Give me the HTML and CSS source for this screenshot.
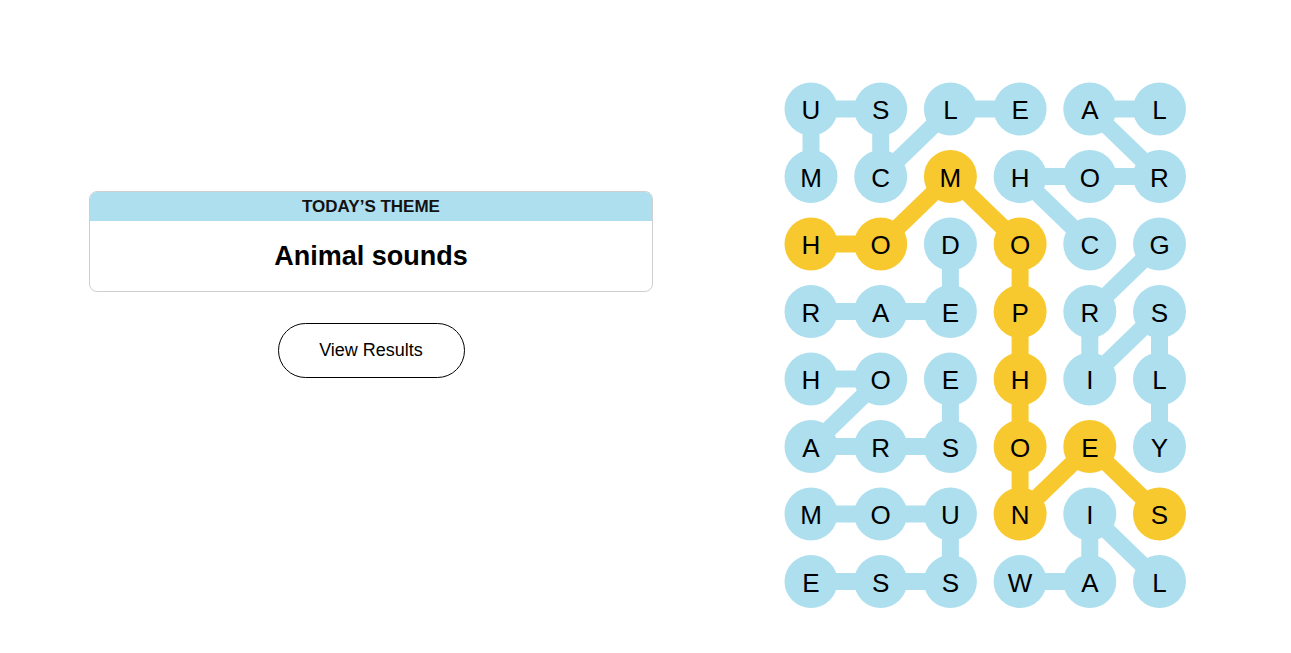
FILE: index.html
```html
<!DOCTYPE html>
<html lang="en">
  <head>
    <meta charset="UTF-8" />
    <meta name="viewport" content="width=device-width, initial-scale=1.0" />
    <title>Strands</title>
    <link rel="stylesheet" href="styles.css">
  </head>
  <body>
    <main class="juego">
      <section class="panel">
        <div class="tema">
          <div class="tema-titulo">TODAY’S THEME</div>
          <div class="tema-texto">Animal sounds</div>
        </div>
        <button class="resultados">View Results</button>
      </section>

      <svg class="tablero" width="404" height="528" viewBox="0 0 404 528"></svg>
    </main>

    <script>
      const letras = [
        "USLEAL",
        "MCMHOR",
        "HODOCG",
        "RAEPRS",
        "HOEHIL",
        "ARSOEY",
        "MOUNIS",
        "ESSWAL",
      ];

      // [fila, columna] de cada palabra encontrada
      const palabras = [
        { tipo: "azul", ruta: [[1,0],[0,0],[0,1],[1,1],[0,2],[0,3]] },
        { tipo: "azul", ruta: [[2,4],[1,3],[1,4],[1,5],[0,4],[0,5]] },
        { tipo: "azul", ruta: [[2,2],[3,2],[3,1],[3,0]] },
        { tipo: "azul", ruta: [[2,5],[3,4],[4,4],[3,5],[4,5],[5,5]] },
        { tipo: "azul", ruta: [[4,0],[4,1],[5,0],[5,1],[5,2],[4,2]] },
        { tipo: "azul", ruta: [[6,0],[6,1],[6,2],[7,2],[7,1],[7,0]] },
        { tipo: "azul", ruta: [[7,3],[7,4],[6,4],[7,5]] },
        { tipo: "oro", ruta: [[2,0],[2,1],[1,2],[2,3],[3,3],[4,3],[5,3],[6,3],[5,4],[6,5]] },
      ];

      const tablero = document.querySelector(".tablero");
      const cx = (c) => 27 + c * 69.7;
      const cy = (f) => 27 + f * 67.5;

      let lineas = "";
      let puntos = "";
      const color = {};

      palabras.forEach((p) => {
        p.ruta.forEach(([f, c], i) => {
          color[f + "-" + c] = p.tipo;
          if (i > 0) {
            const [f0, c0] = p.ruta[i - 1];
            lineas += `<line class="enlace ${p.tipo}" x1="${cx(c0)}" y1="${cy(f0)}" x2="${cx(c)}" y2="${cy(f)}" />`;
          }
        });
      });

      letras.forEach((fila, f) => {
        fila.split("").forEach((l, c) => {
          const tipo = color[f + "-" + c] || "azul";
          puntos += `<circle class="punto ${tipo}" cx="${cx(c)}" cy="${cy(f)}" r="26.5" />`;
          puntos += `<text class="letra" x="${cx(c)}" y="${cy(f) + 1}">${l}</text>`;
        });
      });

      tablero.innerHTML = lineas + puntos;
    </script>
  </body>
</html>
```

FILE: styles.css
```css
body {
  margin: 0;
  background: #ffffff;
  font-family: "Liberation Sans", Arial, sans-serif;
  color: #000000;
}
.juego {
  display: flex;
  align-items: flex-start;
  padding: 82px 0 0 89px;
}
.panel {
  width: 564px;
  margin-top: 109px;
  margin-right: 131px;
  display: flex;
  flex-direction: column;
  align-items: center;
}
.tema {
  width: 100%;
  box-sizing: border-box;
  border: 1px solid #cfcfcf;
  border-radius: 8px;
  overflow: hidden;
}
.tema-titulo {
  background-color: #aedfee;
  height: 29px;
  line-height: 30px;
  text-align: center;
  font-size: 17px;
  font-weight: 700;
  color: #121212;
}
.tema-texto {
  height: 70px;
  line-height: 70px;
  text-align: center;
  font-size: 27px;
  font-weight: 700;
}
.resultados {
  margin-top: 31px;
  width: 187px;
  height: 55px;
  border: 1px solid #000000;
  border-radius: 28px;
  background: #ffffff;
  font-family: "Liberation Sans", Arial, sans-serif;
  font-size: 18px;
  color: #000000;
  cursor: pointer;
}
.tablero {
  display: block;
  flex-shrink: 0;
}
.enlace {
  stroke-width: 17;
}
.enlace.azul {
  stroke: #aedfee;
}
.enlace.oro {
  stroke: #f8c92f;
}
.punto.azul {
  fill: #aedfee;
}
.punto.oro {
  fill: #f8c92f;
}
.letra {
  font-family: "Liberation Sans", Arial, sans-serif;
  font-size: 26px;
  fill: #000000;
  text-anchor: middle;
  dominant-baseline: central;
}
```
